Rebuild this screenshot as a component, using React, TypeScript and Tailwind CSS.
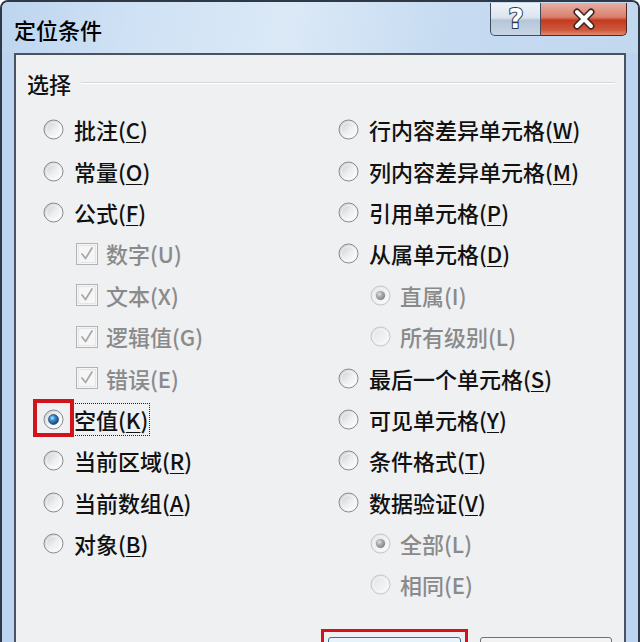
import React from "react";

const cjk = "font-['Noto_Sans_CJK_SC','Noto_Sans',sans-serif]";

type Item = {
  kind: "radio" | "check" | "sub";
  text: string;
  k: string;
  checked?: boolean;
  disabled?: boolean;
  focus?: boolean;
};

const leftItems: Item[] = [
  { kind: "radio", text: "批注", k: "C" },
  { kind: "radio", text: "常量", k: "O" },
  { kind: "radio", text: "公式", k: "F" },
  { kind: "check", text: "数字", k: "U", checked: true, disabled: true },
  { kind: "check", text: "文本", k: "X", checked: true, disabled: true },
  { kind: "check", text: "逻辑值", k: "G", checked: true, disabled: true },
  { kind: "check", text: "错误", k: "E", checked: true, disabled: true },
  { kind: "radio", text: "空值", k: "K", checked: true, focus: true },
  { kind: "radio", text: "当前区域", k: "R" },
  { kind: "radio", text: "当前数组", k: "A" },
  { kind: "radio", text: "对象", k: "B" },
];

const rightItems: Item[] = [
  { kind: "radio", text: "行内容差异单元格", k: "W" },
  { kind: "radio", text: "列内容差异单元格", k: "M" },
  { kind: "radio", text: "引用单元格", k: "P" },
  { kind: "radio", text: "从属单元格", k: "D" },
  { kind: "sub", text: "直属", k: "I", checked: true, disabled: true },
  { kind: "sub", text: "所有级别", k: "L", disabled: true },
  { kind: "radio", text: "最后一个单元格", k: "S" },
  { kind: "radio", text: "可见单元格", k: "Y" },
  { kind: "radio", text: "条件格式", k: "T" },
  { kind: "radio", text: "数据验证", k: "V" },
  { kind: "sub", text: "全部", k: "L", checked: true, disabled: true },
  { kind: "sub", text: "相同", k: "E", disabled: true },
];

function Radio({ checked = false, disabled = false }: { checked?: boolean; disabled?: boolean }) {
  return (
    <svg width="21" height="21" viewBox="0 0 21 21" className="shrink-0">
      <defs>
        <linearGradient id="rfill" x1="0" y1="0" x2="1" y2="1">
          <stop offset="0" stopColor="#c4c7ca" />
          <stop offset="0.55" stopColor="#eff0f1" />
          <stop offset="1" stopColor="#ffffff" />
        </linearGradient>
        <linearGradient id="rfillOff" x1="0" y1="0" x2="1" y2="1">
          <stop offset="0" stopColor="#e0e2e4" />
          <stop offset="1" stopColor="#fafafa" />
        </linearGradient>
        <radialGradient id="rblue" cx="0.38" cy="0.35" r="0.7">
          <stop offset="0" stopColor="#c6e8ff" />
          <stop offset="0.35" stopColor="#3f8fd6" />
          <stop offset="1" stopColor="#0c3f78" />
        </radialGradient>
        <radialGradient id="rgray" cx="0.38" cy="0.35" r="0.7">
          <stop offset="0" stopColor="#e6e6e6" />
          <stop offset="0.4" stopColor="#adadad" />
          <stop offset="1" stopColor="#7f7f7f" />
        </radialGradient>
      </defs>
      <circle
        cx="10.5"
        cy="10.5"
        r="9.5"
        fill={disabled ? "url(#rfillOff)" : "url(#rfill)"}
        stroke={disabled ? "#c3c6c9" : "#878b90"}
      />
      <circle cx="10.5" cy="10.5" r="7" fill="none" stroke="#ffffff" strokeOpacity="0.55" />
      {checked && !disabled && <circle cx="10.5" cy="10.5" r="5" fill="url(#rblue)" stroke="#0b3565" strokeWidth="0.6" />}
      {checked && disabled && <circle cx="10.5" cy="10.5" r="4.6" fill="url(#rgray)" />}
    </svg>
  );
}

function Check() {
  return (
    <svg width="22" height="22" viewBox="0 0 22 22" className="shrink-0">
      <rect x="0.5" y="0.5" width="21" height="21" fill="#f6f6f6" stroke="#b1b4b7" />
      <rect x="2.5" y="2.5" width="17" height="17" fill="none" stroke="#e4e5e6" />
      <path d="M6 11 L9.5 15.5 L16 5" fill="none" stroke="#a7a9ab" strokeWidth="1.8" strokeLinecap="round" strokeLinejoin="round" />
    </svg>
  );
}

function Label({ item }: { item: Item }) {
  const body = item.disabled ? (
    <span>
      {item.text}({item.k})
    </span>
  ) : (
    <span>
      {item.text}(<span className="underline underline-offset-[3px] decoration-1">{item.k}</span>)
    </span>
  );
  return (
    <span
      className={`text-[22px] leading-[31px] font-medium whitespace-nowrap ${
        item.disabled ? "text-[#8a8a8a]" : "text-[#111]"
      } ${item.focus ? "outline outline-1 outline-dotted outline-[#222] px-[1px] -ml-[1px]" : ""}`}
    >
      {body}
    </span>
  );
}

function Row({ item }: { item: Item }) {
  if (item.kind === "check") {
    return (
      <div className="h-[41.4px] flex items-center pl-[33px] gap-[8px]">
        <Check />
        <Label item={item} />
      </div>
    );
  }
  if (item.kind === "sub") {
    return (
      <div className="h-[41.4px] flex items-center pl-[32px] gap-[9px]">
        <Radio checked={item.checked} disabled />
        <Label item={item} />
      </div>
    );
  }
  return (
    <div className="h-[41.4px] flex items-center gap-[10px]">
      <span className="relative flex">
        <Radio checked={item.checked} />
        {item.focus && (
          <span className="absolute -left-[10px] -right-[10px] -top-[10px] -bottom-[7px] border-[4px] border-[#d3131c]" />
        )}
      </span>
      <Label item={item} />
    </div>
  );
}

function TitleButtons() {
  return (
    <div className="flex mr-[11px] mt-[1px]">
      <div className="w-[51px] h-[33px] border border-t-0 border-[#3e4b5c] rounded-bl-[5px] flex items-center justify-center bg-[linear-gradient(to_bottom,#eef3f8_0%,#dbe4ee_46%,#b6c6d9_54%,#c8d5e4_100%)]">
        <svg width="24" height="28" viewBox="0 0 24 28">
          <text
            x="12"
            y="23"
            textAnchor="middle"
            fontSize="26"
            fontWeight="700"
            fontFamily="DejaVu Sans, sans-serif"
            fill="#ffffff"
            stroke="#2c3a4a"
            strokeWidth="2"
            paintOrder="stroke"
          >
            ?
          </text>
        </svg>
      </div>
      <div className="w-[86px] h-[33px] border border-l-0 border-t-0 border-[#5a2418] rounded-br-[5px] flex items-center justify-center bg-[linear-gradient(to_bottom,#e8b0a4_0%,#d97f6c_44%,#c23a1f_54%,#cf5a3f_85%,#e08a72_100%)]">
        <svg width="28" height="22" viewBox="0 0 28 22">
          <path d="M7 4 L21 18 M21 4 L7 18" stroke="#3a2320" strokeWidth="7" strokeLinecap="round" />
          <path d="M7 4 L21 18 M21 4 L7 18" stroke="#ffffff" strokeWidth="4" strokeLinecap="round" />
        </svg>
      </div>
    </div>
  );
}

export default function App() {
  return (
    <div className={`w-[640px] h-[642px] overflow-hidden bg-white ${cjk}`}>
      <div className="h-full flex flex-col border-2 border-b-0 border-[#2f3946] rounded-t-[8px] bg-[#bcd4ef]">
        {/* title bar */}
        <div className="h-[51px] shrink-0 flex items-start justify-between rounded-t-[6px] bg-[linear-gradient(100deg,#bdd5ef_0%,#cfe1f4_20%,#dbe9f7_45%,#c6dbf1_70%,#c2d8ef_100%)]">
          <div className="pl-[12px] pt-[12px] text-[22px] leading-[31px] font-medium text-black">定位条件</div>
          <TitleButtons />
        </div>

        {/* content panel */}
        <div className="flex-1 mx-[12px] border-2 border-b-0 border-[#4a5460] bg-[#eef0f2] flex flex-col">
          <div className="pt-[14px] pl-[11px] pr-[9px] h-[42px] flex items-end">
            <div className="h-[28px] w-full flex items-center">
              <span className="text-[22px] leading-[31px] font-medium text-[#111]">选择</span>
              <div className="flex-1 ml-[10px] h-[2px] border-t border-[#d4d7da] border-b border-b-white" />
            </div>
          </div>

          <div className="mt-[12px] flex pl-[27px]">
            <div className="w-[295px] flex flex-col">
              {leftItems.map((it, i) => (
                <Row key={i} item={it} />
              ))}
            </div>
            <div className="flex-1 flex flex-col">
              {rightItems.map((it, i) => (
                <Row key={i} item={it} />
              ))}
            </div>
          </div>

          {/* 确定 / 取消 — only the top edge is in view */}
          <div className="mt-[23px] flex justify-end items-start pr-[12px]">
            <div className="border-[3px] border-[#d5121a] px-[4px] pt-[5px] pb-[4px]">
              <div className="w-[133px] h-[36px] rounded-[3px] border border-[#3c6f9c] bg-[linear-gradient(to_bottom,#eaf5fc,#c9e3f5)]" />
            </div>
            <div className="ml-[12px] mt-[8px] w-[132px] h-[36px] rounded-[3px] border border-[#707070] bg-[linear-gradient(to_bottom,#f4f4f4,#dcdcdc)]" />
          </div>
        </div>
      </div>
    </div>
  );
}
